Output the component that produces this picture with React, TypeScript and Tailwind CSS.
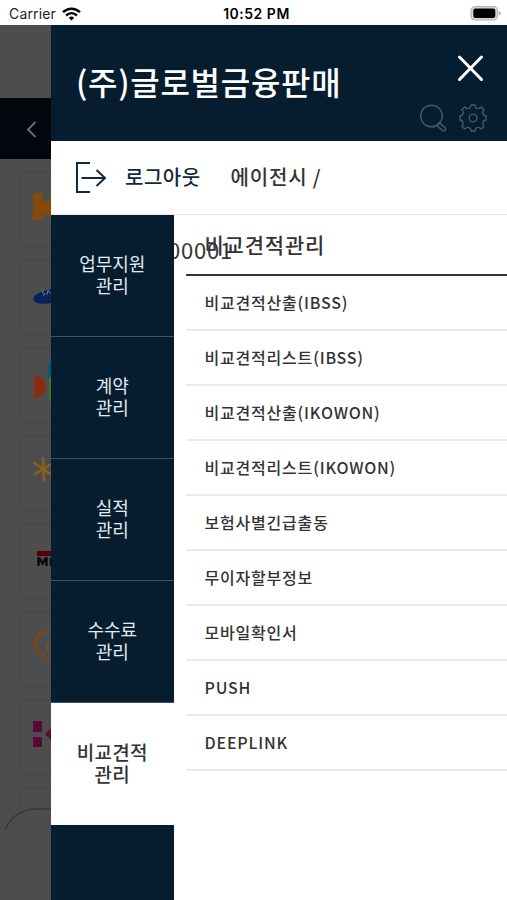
import React from 'react';

const menus = [
  { top: '업무지원', bottom: '관리' },
  { top: '계약', bottom: '관리' },
  { top: '실적', bottom: '관리' },
  { top: '수수료', bottom: '관리' },
  { top: '비교견적', bottom: '관리', active: true },
];

const items = [
  '비교견적산출(IBSS)',
  '비교견적리스트(IBSS)',
  '비교견적산출(IKOWON)',
  '비교견적리스트(IKOWON)',
  '보험사별긴급출동',
  '무이자할부정보',
  '모바일확인서',
  'PUSH',
  'DEEPLINK',
];

const logos = [
  <path key="h" fill="#85490b" d="M1 20h10v8l3 1 6-5h4v23h-4l-6-6-3 1v5H1z" />,
  <g key="s">
    <ellipse cx="19" cy="35" rx="18" ry="7" fill="#08225a" transform="rotate(-12 19 35)" />
    <path d="M12 29l-2 2 3 2-2 2m4-1l1-5 3 4m1-1l1-4 2 4" stroke="#777d8e" strokeWidth="1" fill="none" />
  </g>,
  <g key="d">
    <path fill="#0b5875" d="M16 14h8v16h-8z" />
    <path fill="#447020" d="M17 28h7v24h-7z" />
    <path fill="#8a2c10" d="M2 27c16 0 16 22 0 22z" />
  </g>,
  <path key="k" stroke="#87621a" strokeWidth="2.5" strokeLinecap="round" fill="none" d="M11 21l1 22M2 26l18 12M3 37l18-11" />,
  <g key="m">
    <path fill="#56000b" d="M5 26h19v5H5z" />
    <path stroke="#0a0a0a" strokeWidth="2.4" fill="none" d="M6.500 41v-7.500h1l3 5 3-5h1V41M19 33v8" />
  </g>,
  <g key="o" fill="none" strokeLinecap="round">
    <path stroke="#824710" strokeWidth="2" d="M17 18C1 19-1 34 8 40q5 1 9 7" />
    <path stroke="#824710" strokeWidth="1.2" d="M11 20C2 25 2 37 9 39" />
    <path stroke="#72502f" strokeWidth="1.5" d="M20 28c-7 2-7 10 0 12" />
  </g>,
  <path key="p" fill="#5d0638" d="M1 20h9v11H1zM1 36h9v10H1zM20 26v14l-7-7z" />,
  null,
];

function StatusBar() {
  return (
    <div className="relative z-10 flex h-[25px] shrink-0 items-center justify-between bg-white pl-[9px] pr-[6px] text-black">
      <div className="flex w-24 items-center gap-[6px] pt-[2px]">
        <span className="font-[Inter] text-[14px] leading-none tracking-[0.15px] text-[#222]">Carrier</span>
        <svg width="19" height="14" viewBox="0 0 19 14" fill="none" stroke="black" strokeWidth="2.5">
          <path d="M1 5.200c5-4.700 12-4.700 17 0" />
          <path d="M4.100 8.500c3.200-3 7.600-3 10.800 0" />
          <path d="M6.800 10.700Q9.500 8.500 12.200 10.700L9.500 13.500Z" fill="black" stroke="none" />
        </svg>
      </div>
      <span className="pt-[2px] font-[Inter] text-[14px] font-semibold leading-none tracking-[0.5px] -mr-[3px]">10:52 PM</span>
      <div className="flex w-24 justify-end pt-[1px]">
        <svg width="31" height="15" viewBox="0 0 31 15">
          <rect x="1" y=".7" width="26.500" height="13.200" rx="4" fill="#ddd" stroke="#b5b5b5" strokeWidth="1.300" />
          <rect x="3.300" y="2.600" width="22" height="9.400" rx="2" />
          <path d="M28.800 5q2 .8 2 2.300t-2 2.300z" fill="#aaa" />
        </svg>
      </div>
    </div>
  );
}

// Dimmed page that stays visible at the left of the drawer
function Backdrop() {
  return (
    <div className="absolute inset-0 flex flex-col bg-[#4d4d4d] pt-[98px]">
      <div className="flex h-[61px] shrink-0 items-center bg-[#02070e] pl-[26px]">
        <svg className="mt-[2px]" width="11" height="17" viewBox="0 0 11 17" fill="none" stroke="#6c7075" strokeWidth="1.800">
          <path d="M9.500 1L2 8.500 9.500 16" />
        </svg>
      </div>
      <div className="mt-[13px] flex flex-col gap-[13px] pl-5">
        {logos.map((logo, i) => (
          <div key={i} className="h-[75px] w-[460px] rounded border border-[#474747] pl-[11px]">
            <svg width="24" height="60" viewBox="0 0 24 60">{logo}</svg>
          </div>
        ))}
      </div>
      <svg className="absolute left-0 top-[806px]" width="60" height="94" viewBox="0 0 60 94">
        <path d="M5 94V24Q14 3 38 3h22v91z" fill="#4d4d4d" />
        <path d="M5 24Q14 3 38 3h22" fill="none" stroke="#383838" strokeWidth="1.300" />
      </svg>
    </div>
  );
}

function DrawerHeader() {
  return (
    <div className="flex h-[116px] shrink-0 justify-between bg-[#061c2f] pl-[25px] pr-[20px] text-white">
      <h1 className="pt-[32px] text-[32px] font-medium leading-[48px] tracking-[0.7px]">(주)글로벌금융판매</h1>
      <div className="flex flex-col items-end">
        <svg className="mr-[3px] mt-[30px]" width="27" height="27" viewBox="0 0 27 27" fill="none" stroke="white" strokeWidth="3" strokeLinecap="round">
          <path d="M2.500 2l22 22.500M24.500 2l-22 22.500" />
        </svg>
        <div className="mt-[22px] flex gap-3 text-[#485966]">
          <svg width="28" height="28" viewBox="0 0 28 28" fill="none" stroke="currentColor" strokeWidth="1.400">
            <circle cx="12.500" cy="12" r="10.800" />
            <path d="M18.300 20.800l1.900-2.200 1.500 1.300 4.300 3.800q1.400 1.700 0 2.900-1.400.9-3-.5l-4.700-4.200z" />
          </svg>
          <svg width="28" height="28" viewBox="0 0 28 28" fill="none" stroke="currentColor" strokeWidth="1.400" strokeLinejoin="round">
            <path d="M12 1h4q.3 3.600 3 3.600 1.500 0 3.200-1.700l2.900 2.900q-2 2-1.300 3.700.7 2 3.200 2.500v4q-2.500.5-3.200 2.500-.7 1.700 1.300 3.700l-2.900 2.900q-1.700-1.700-3.200-1.700-2.700 0-3 3.600h-4q-.3-3.600-3-3.600-1.500 0-3.200 1.700L2.900 22.200q2-2 1.300-3.700Q3.500 16.500 1 16v-4q2.500-.5 3.200-2.500.7-1.700-1.300-3.700l2.900-2.900Q7.500 4.600 9 4.600q2.700 0 3-3.600z" />
            <circle cx="14" cy="14" r="3.900" />
          </svg>
        </div>
      </div>
    </div>
  );
}

export default function App() {
  return (
    <div className="relative flex h-[900px] w-[507px] flex-col overflow-hidden font-['Noto_Sans_CJK_KR',sans-serif]">
      <Backdrop />
      <StatusBar />
      <div className="relative ml-[51px] flex min-h-0 flex-1 flex-col bg-white text-[#333]">
        <DrawerHeader />

        <div className="relative flex h-[73.5px] shrink-0 items-center border-b border-[#e9eaeb] pl-[25px]">
          <svg width="31" height="32" viewBox="0 0 31 32" fill="none" stroke="#102a3e" strokeWidth="2">
            <path d="M14 2H1v29h13M5.500 17H29M20.500 9l8.500 8-8.500 8" />
          </svg>
          <span className="ml-[18px] text-[20px] font-medium leading-none tracking-[0.5px] text-[#102a3e]">로그아웃</span>
          <span className="ml-[30px] text-[20px] font-medium leading-none tracking-[0.8px]">에이전시 /</span>
          {/* agency code wraps below the bar and runs under the menu */}
          <span className="absolute left-[117px] top-[96px] text-[22px] leading-[24px] tracking-[0.8px]">00001</span>
        </div>

        <div className="relative flex min-h-0 flex-1">
          <nav className="w-[122.5px] shrink-0 bg-[#061c2f]">
            {menus.map((menu) => (
              <div
                key={menu.top}
                className={
                  menu.active
                    ? 'flex h-[122px] flex-col items-center justify-center bg-white pb-[2px] text-[19px] font-medium leading-[22px] tracking-[0.3px] text-[#333]'
                    : 'flex h-[122px] flex-col items-center justify-center border-b border-[#405365] pb-[2px] text-[18px] leading-[22px] text-[#e3eaf2]'
                }
              >
                <span>{menu.top}</span>
                <span>{menu.bottom}</span>
              </div>
            ))}
          </nav>
          <section className="ml-3 flex-1">
            <h2 className="h-[61.5px] border-b-2 border-[#333] pl-[19px] pt-[14px] text-[21px] font-medium leading-[30px] tracking-[0.8px]">
              비교견적관리
            </h2>
            <ul>
              {items.map((item) => (
                <li
                  key={item}
                  className="flex h-[55px] items-center border-b-2 border-[#ebebeb] pb-[2px] pl-[19px] text-[16px] font-medium leading-none tracking-[0.8px]"
                >
                  {item}
                </li>
              ))}
            </ul>
          </section>
        </div>
      </div>
    </div>
  );
}
